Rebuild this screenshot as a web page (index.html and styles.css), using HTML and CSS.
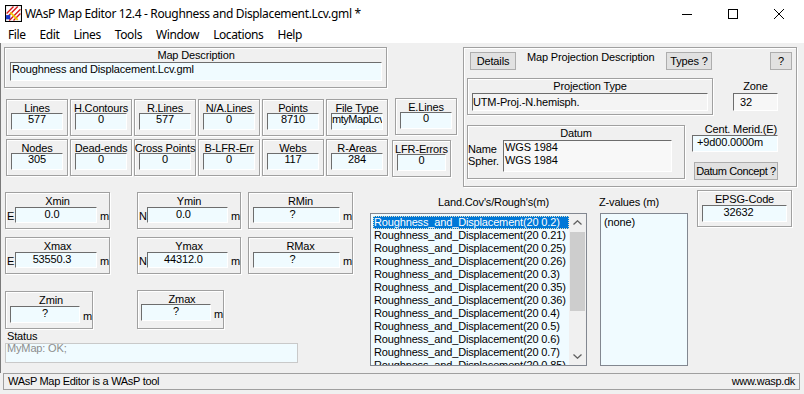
FILE: index.html
```html
<!DOCTYPE html>
<html>
<head>
<meta charset="utf-8">
<title>WAsP Map Editor</title>
<link rel="stylesheet" href="styles.css">
</head>
<body>
<div class="window">
  <header class="titlebar">
    <svg class="app-icon" viewBox="0 0 16 16">
      <rect x="0.5" y="0.5" width="15" height="15" fill="#fff" stroke="#000"/>
      <path d="M1.5 8 L8 1.5 M1.5 12 L12 1.5 M4 14.5 L14.5 4 M8 14.5 L14.5 8" stroke="#d81818" stroke-width="1.3" fill="none"/>
      <path d="M5 7 L12 14" stroke="#f2cc00" stroke-width="1.6" fill="none"/>
      <rect x="1" y="9.5" width="4" height="4" fill="#1836c8"/>
    </svg>
    <span class="title">WAsP Map Editor 12.4 - Roughness and Displacement.Lcv.gml *</span>
    <div class="caption">
      <span class="cap-btn"><svg viewBox="0 0 10 10"><path d="M0 5.5 H10"/></svg></span>
      <span class="cap-btn"><svg viewBox="0 0 10 10"><rect x="0.5" y="0.5" width="9" height="9"/></svg></span>
      <span class="cap-btn"><svg viewBox="0 0 10 10"><path d="M0 0 L10 10 M10 0 L0 10"/></svg></span>
    </div>
  </header>

  <nav class="menubar">
    <span class="menu-item">File</span>
    <span class="menu-item">Edit</span>
    <span class="menu-item">Lines</span>
    <span class="menu-item">Tools</span>
    <span class="menu-item">Window</span>
    <span class="menu-item">Locations</span>
    <span class="menu-item">Help</span>
  </nav>

  <main class="client">
    <div class="top">
      <div class="top-left">
        <div class="etched mapdesc">
          <div class="cap">Map Description</div>
          <div class="edit mapdesc-edit">Roughness and Displacement.Lcv.gml</div>
        </div>

        <div class="stats">
          <div class="stats-row">
            <div class="etched stat"><div class="stat-label">Lines</div><div class="edit stat-edit">577</div></div>
            <div class="etched stat"><div class="stat-label">H.Contours</div><div class="edit stat-edit">0</div></div>
            <div class="etched stat"><div class="stat-label">R.Lines</div><div class="edit stat-edit">577</div></div>
            <div class="etched stat"><div class="stat-label">N/A.Lines</div><div class="edit stat-edit">0</div></div>
            <div class="etched stat"><div class="stat-label">Points</div><div class="edit stat-edit">8710</div></div>
            <div class="etched stat"><div class="stat-label">File Type</div><div class="edit stat-edit stat-clip">mtyMapLcv</div></div>
            <div class="etched stat stat-elines"><div class="stat-label">E.Lines</div><div class="edit stat-edit">0</div></div>
          </div>
          <div class="stats-row stats-row2">
            <div class="etched stat"><div class="stat-label">Nodes</div><div class="edit stat-edit">305</div></div>
            <div class="etched stat"><div class="stat-label">Dead-ends</div><div class="edit stat-edit">0</div></div>
            <div class="etched stat"><div class="stat-label">Cross Points</div><div class="edit stat-edit">0</div></div>
            <div class="etched stat"><div class="stat-label">B-LFR-Err</div><div class="edit stat-edit">0</div></div>
            <div class="etched stat"><div class="stat-label">Webs</div><div class="edit stat-edit">117</div></div>
            <div class="etched stat"><div class="stat-label">R-Areas</div><div class="edit stat-edit">284</div></div>
            <div class="etched stat stat-lfr"><div class="stat-label">LFR-Errors</div><div class="edit stat-edit">0</div></div>
          </div>
        </div>
      </div>

      <section class="etched proj">
        <div class="proj-head">
          <span class="btn btn-details">Details</span>
          <span class="proj-title">Map Projection Description</span>
          <span class="btn btn-types">Types ?</span>
          <span class="btn btn-help">?</span>
        </div>
        <div class="proj-row2">
          <div class="etched projtype">
            <div class="cap">Projection Type</div>
            <div class="edit ro-edit projtype-edit">UTM-Proj.-N.hemisph.</div>
          </div>
          <div class="zone">
            <div class="cap">Zone</div>
            <div class="edit ro-edit zone-edit">32</div>
          </div>
        </div>
        <div class="proj-row3">
          <div class="etched datum">
            <div class="cap">Datum</div>
            <div class="datum-body">
              <div class="datum-labels"><div>Name</div><div>Spher.</div></div>
              <div class="edit datum-edit"><div>WGS 1984</div><div>WGS 1984</div></div>
            </div>
          </div>
          <div class="merid">
            <div class="merid-label">Cent. Merid.(E)</div>
            <div class="edit merid-edit">+9d00.0000m</div>
            <span class="btn btn-concept">Datum Concept ?</span>
          </div>
        </div>
      </section>
    </div>

    <div class="bottom">
      <div class="bot-left">
        <div class="coords-row">
          <div class="etched coord coord-x">
            <div class="coord-label">Xmin</div>
            <div class="coord-body"><span class="axis">E</span><div class="edit coord-edit">0.0</div><span class="unit">m</span></div>
          </div>
          <div class="etched coord coord-y">
            <div class="coord-label">Ymin</div>
            <div class="coord-body"><span class="axis">N</span><div class="edit coord-edit">0.0</div><span class="unit">m</span></div>
          </div>
          <div class="etched coord coord-r">
            <div class="coord-label">RMin</div>
            <div class="coord-body"><div class="edit coord-edit">?</div><span class="unit">m</span></div>
          </div>
        </div>
        <div class="coords-row coords-row2">
          <div class="etched coord coord-x">
            <div class="coord-label">Xmax</div>
            <div class="coord-body"><span class="axis">E</span><div class="edit coord-edit">53550.3</div><span class="unit">m</span></div>
          </div>
          <div class="etched coord coord-y">
            <div class="coord-label">Ymax</div>
            <div class="coord-body"><span class="axis">N</span><div class="edit coord-edit">44312.0</div><span class="unit">m</span></div>
          </div>
          <div class="etched coord coord-r">
            <div class="coord-label">RMax</div>
            <div class="coord-body"><div class="edit coord-edit">?</div><span class="unit">m</span></div>
          </div>
        </div>
        <div class="zrow">
          <div class="etched zbox zmin">
            <div class="coord-label">Zmin</div>
            <div class="coord-body"><div class="edit z-edit">?</div><span class="unit">m</span></div>
          </div>
          <div class="etched zbox zmax">
            <div class="coord-label">Zmax</div>
            <div class="coord-body"><div class="edit z-edit">?</div><span class="unit">m</span></div>
          </div>
        </div>
        <div class="status-label">Status</div>
        <div class="status-box">MyMap: OK;</div>
      </div>

      <div class="landcov">
        <div class="list-label landcov-label">Land.Cov's/Rough's(m)</div>
        <div class="listbox landcov-list">
          <div class="items">
            <div class="item selected">Roughness_and_Displacement(20 0.2)</div>
            <div class="item">Roughness_and_Displacement(20 0.21)</div>
            <div class="item">Roughness_and_Displacement(20 0.25)</div>
            <div class="item">Roughness_and_Displacement(20 0.26)</div>
            <div class="item">Roughness_and_Displacement(20 0.3)</div>
            <div class="item">Roughness_and_Displacement(20 0.35)</div>
            <div class="item">Roughness_and_Displacement(20 0.36)</div>
            <div class="item">Roughness_and_Displacement(20 0.4)</div>
            <div class="item">Roughness_and_Displacement(20 0.5)</div>
            <div class="item">Roughness_and_Displacement(20 0.6)</div>
            <div class="item">Roughness_and_Displacement(20 0.7)</div>
            <div class="item">Roughness_and_Displacement(20 0.85)</div>
          </div>
          <div class="scrollbar">
            <div class="sb-arrow"><svg viewBox="0 0 9 5"><path d="M0.5 4.5 L4.5 0.8 L8.5 4.5"/></svg></div>
            <div class="sb-track"><div class="sb-thumb"></div></div>
            <div class="sb-arrow"><svg viewBox="0 0 9 5"><path d="M0.5 0.5 L4.5 4.2 L8.5 0.5"/></svg></div>
          </div>
        </div>
      </div>

      <div class="zvalues">
        <div class="list-label zvalues-label">Z-values (m)</div>
        <div class="listbox zvalues-list">
          <div class="zitem">(none)</div>
        </div>
      </div>

      <div class="etched epsg">
        <div class="stat-label epsg-label">EPSG-Code</div>
        <div class="edit epsg-edit">32632</div>
      </div>
    </div>
  </main>

  <footer class="statusbar">
    <span>WAsP Map Editor is a WAsP tool</span>
    <span>www.wasp.dk</span>
  </footer>
</div>
</body>
</html>
```

FILE: styles.css
```css
* { box-sizing: border-box; }
html, body { margin: 0; padding: 0; }
body {
  width: 804px;
  height: 394px;
  overflow: hidden;
  background: #f0f0f0;
  font-family: "Liberation Sans", Arial, sans-serif;
  font-size: 11px;
  letter-spacing: -0.15px;
  color: #000;
}
.window {
  width: 804px;
  height: 394px;
  display: flex;
  flex-direction: column;
  background: #f0f0f0;
}

/* title bar */
.titlebar {
  height: 27px;
  flex: none;
  background: #fff;
  display: flex;
  align-items: center;
  font-family: "Noto Sans", sans-serif;
  font-size: 12px;
  letter-spacing: -0.35px;
}
.app-icon { width: 17px; height: 17px; margin-left: 5px; flex: none; }
.title { margin-left: 3px; white-space: nowrap; }
.caption { margin-left: auto; margin-right: 2px; display: flex; align-self: stretch; }
.cap-btn { width: 46px; display: flex; align-items: center; justify-content: center; }
.cap-btn svg { width: 10px; height: 10px; stroke: #000; stroke-width: 1; fill: none; }

/* menu */
.menubar {
  height: 16px;
  flex: none;
  background: #fff;
  display: flex;
  padding-left: 1px;
  font-family: "Noto Sans", sans-serif;
  font-size: 12px;
  letter-spacing: -0.4px;
  line-height: 16px;
}
.menu-item { padding: 0 7px; }

/* client */
.client {
  height: 330px;
  flex: none;
  box-shadow: inset 1px 0 0 #7a7a7a;
}
.etched {
  border: 1px solid #a0a0a0;
  box-shadow: inset 1px 1px 0 #fff, 1px 1px 0 #fff;
}
.edit {
  background: #f0fbff;
  border-top: 1px solid #6d6d6d;
  border-left: 1px solid #6d6d6d;
  border-right: 1px solid #fff;
  border-bottom: 1px solid #fff;
  white-space: nowrap;
  overflow: hidden;
}
.cap { text-align: center; height: 13px; line-height: 13px; white-space: nowrap; }
.btn {
  display: block;
  height: 18px;
  background: #e1e1e1;
  border: 1px solid #adadad;
  line-height: 16px;
  text-align: center;
  white-space: nowrap;
}

.top { display: flex; padding-top: 4px; height: 144px; }
.top-left { width: 463px; padding-left: 4px; }

.mapdesc { width: 383px; height: 41px; padding: 1px 4px 0 5px; }
.mapdesc-edit { height: 19px; line-height: 13px; padding: 0 1px; }

.stats { margin-top: 11px; margin-left: 2px; }
.stats-row { display: flex; gap: 2px; align-items: flex-start; height: 37px; }
.stats-row2 { margin-top: 3px; }
.stat { width: 62px; height: 37px; padding: 2px 4px 0; }
.stat-label { height: 11px; line-height: 13px; text-align: center; white-space: nowrap; margin: 0 -6px; }
.stat-edit { height: 17px; line-height: 9px; text-align: center; padding-top: 1px; }
.stat-clip { text-align: left; padding-left: 0; letter-spacing: -0.45px; }
.stat-elines { margin-left: 5px; margin-top: -1px; }
.stat-lfr { margin-left: 2px; margin-top: 1px; width: 59px; }

/* projection panel */
.proj { width: 334px; height: 140px; padding: 4px 0 0 6px; }
.proj-head { display: flex; align-items: flex-start; height: 18px; }
.btn-details { width: 46px; }
.proj-title { width: 150px; padding-left: 11px; line-height: 13px; margin-top: -1px; white-space: nowrap; }
.btn-types { width: 46px; }
.btn-help { width: 22px; margin-left: 58px; }

.proj-row2 { display: flex; margin-top: 8px; margin-left: -3px; }
.projtype { width: 246px; height: 37px; padding: 1px 4px 0; }
.ro-edit { background: #f4f4f4; }
.projtype-edit { height: 18px; line-height: 13px; padding: 2px 1px 0 0; }
.zone { width: 45px; margin-left: 20px; padding-top: 2px; }
.zone-edit { height: 18px; line-height: 13px; padding: 2px 0 0 6px; background: #f7f7f7; }

.proj-row3 { display: flex; margin-top: 10px; margin-left: -3px; }
.datum { width: 218px; height: 54px; padding-top: 1px; }
.datum-body { display: flex; }
.datum-labels { width: 35px; padding-top: 3px; line-height: 12px; white-space: nowrap; }
.datum-edit { width: 169px; height: 32px; line-height: 13px; padding-left: 1px; background: #f8f8f8; }
.merid { width: 86px; margin-left: 7px; margin-top: -2px; }
.merid-label { height: 12px; line-height: 13px; text-align: right; padding-right: 1px; white-space: nowrap; }
.merid-edit { height: 17px; line-height: 13px; padding-left: 4px; }
.btn-concept { width: 84px; margin-left: 2px; margin-top: 10px; letter-spacing: -0.4px; padding: 0; }

/* bottom */
.bottom { display: flex; height: 186px; }
.bot-left { width: 370px; padding: 5px 0 0 5px; }
.coords-row { display: flex; height: 37px; }
.coords-row2 { margin-top: 8px; }
.coord { height: 37px; padding-top: 2px; }
.coord-x { width: 105px; }
.coord-y { width: 104px; margin-left: 27px; }
.coord-r { width: 105px; margin-left: 7px; }
.coord-label { height: 12px; line-height: 13px; text-align: center; }
.coord-body { display: flex; align-items: flex-end; }
.axis { width: 9px; padding-left: 1px; line-height: 13px; }
.coord-edit { height: 16px; line-height: 13px; text-align: center; padding-right: 8px; }
.coord-x .coord-edit { width: 82px; }
.coord-y .coord-edit { width: 83px; }
.coord-r .coord-edit { width: 87px; margin-left: 4px; }
.unit { margin-left: 3px; line-height: 13px; }

.zrow { display: flex; align-items: flex-end; margin-top: 16px; }
.zbox { padding-top: 2px; }
.zmin { width: 88px; height: 38px; padding-left: 4px; }
.zmax { width: 87px; height: 39px; padding-left: 3px; margin-left: 44px; }
.zmax .coord-label { height: 11px; }
.z-edit { height: 17px; line-height: 13px; text-align: center; }
.zmin .z-edit { width: 70px; }
.zmax .z-edit { width: 71px; }

.status-label { margin-top: 1px; height: 13px; line-height: 13px; padding-left: 2px; }
.status-box {
  width: 293px;
  height: 20px;
  border: 1px solid #c9c9c9;
  background: #f0fbff;
  color: #8d8d8d;
  line-height: 9px;
  padding: 0 1px;
}

.list-label { margin-top: 9px; height: 13px; line-height: 13px; white-space: nowrap; }
.listbox {
  margin-top: 4px;
  height: 153px;
  border: 1px solid #828790;
  background: #f0fbff;
  overflow: hidden;
}
.landcov { width: 217px; }
.landcov-label { padding-left: 68px; }
.landcov-list { display: flex; }
.items { flex: 1; padding: 2px 0 0 2px; overflow: hidden; }
.item { height: 13px; line-height: 13px; padding-left: 1px; white-space: nowrap; }
.item.selected {
  background: #0078d7;
  color: #fff;
  outline: 1px dotted #e8e0c0;
  outline-offset: -1px;
}
.scrollbar { width: 17px; flex: none; background: #f0f0f0; display: flex; flex-direction: column; }
.sb-arrow { height: 17px; display: flex; align-items: center; justify-content: center; }
.sb-arrow svg { width: 9px; height: 5px; stroke: #606060; stroke-width: 1.3; fill: none; }
.sb-track { flex: 1; padding: 1px 1px 0; }
.sb-thumb { height: 79px; background: #cdcdcd; }

.zvalues { width: 88px; margin-left: 13px; }
.zvalues-label { margin-left: -1px; }
.zitem { padding: 2px 0 0 3px; line-height: 13px; }

.epsg { width: 95px; height: 37px; margin-left: 9px; margin-top: 3px; padding: 2px 4px 0; }
.epsg-label { height: 12px; margin: 0; }
.epsg-edit { height: 17px; line-height: 13px; text-align: center; padding-right: 12px; }

/* status bar */
.statusbar {
  flex: none;
  height: 17px;
  width: 797px;
  margin-left: 3px;
  border: 1px solid #a0a0a0;
  display: flex;
  justify-content: space-between;
  padding: 0 4px 0 4px;
  line-height: 15px;
  letter-spacing: -0.3px;
}
```
